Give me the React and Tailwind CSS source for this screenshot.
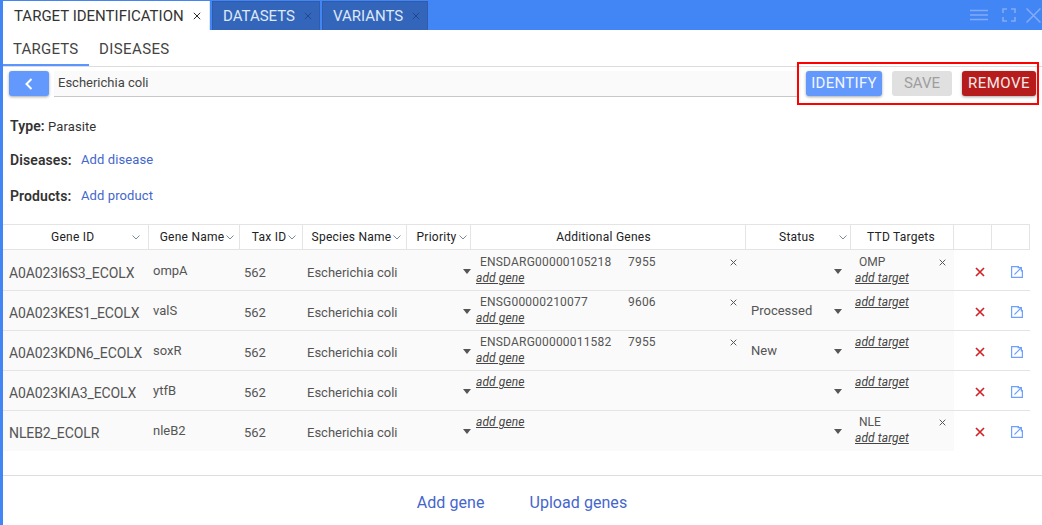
import React from "react";

const cols = "grid grid-cols-[146px_91px_63px_104px_64px_275px_105px_103px_38px_38px]";

function Chevron() {
  return (
    <svg width="8" height="5" viewBox="0 0 8 5" className="shrink-0" fill="none" stroke="#7d8a99" strokeWidth="1">
      <path d="M0.5 0.5 L4 4 L7.5 0.5" />
    </svg>
  );
}

function Caret() {
  return <span className="block w-0 h-0 border-x-[4px] border-x-transparent border-t-[5px] border-t-[#555]" />;
}

function Cross({ c = "#555", s = 7, w = 1.4 }) {
  return (
    <svg width={s} height={s} viewBox="0 0 10 10" stroke={c} strokeWidth={w} fill="none" className="shrink-0">
      <path d="M1 1 L9 9 M9 1 L1 9" />
    </svg>
  );
}

function Head({ children, chevron, className = "", chevClass = "" }) {
  return (
    <div className={`h-[24px] flex items-center justify-center border-r border-[#e4e4e4] text-[12px] tracking-[0.25px] text-[#222] ${className}`}>
      <span>{children}</span>
      {chevron && <span className={chevClass || "ml-[2px]"}><Chevron /></span>}
    </div>
  );
}

function AddLink({ children }) {
  return <span className="italic underline text-[12px] tracking-[0.1px] leading-[16px] text-[#444]">{children}</span>;
}

function Row({ id, name, gene, taxon, status, target, last }) {
  const text = "text-[13px] text-[#555]";
  return (
    <div className={`flex w-[1027px] h-[40px] ${last ? "" : "border-b border-[#e4e4e4]"}`}>
      <div className="grid grid-cols-[146px_91px_63px_104px_64px_275px_105px_103px] bg-[#fafafa] w-[951px]">
        <div className="text-[14px] tracking-[-0.1px] text-[#555] pl-[6px] pt-[14px] leading-[16px] whitespace-nowrap">{id}</div>
        <div className={`${text} pl-[4px] pt-[12px] leading-[16px]`}>{name}</div>
        <div className={`${text} pl-[4px] pt-[14px] leading-[16px]`}>562</div>
        <div className={`${text} pl-[4px] pt-[14px] leading-[16px] whitespace-nowrap`}>Escherichia coli</div>
        <div className="flex justify-end pt-[18px]"><Caret /></div>
        <div className="pt-[3px] pl-[5px]">
          {gene ? (
            <div className="flex items-center h-[16px] pl-[4px] text-[12px] tracking-[0.2px] leading-[16px] text-[#555]">
              <span className="w-[148px]">{gene}</span>
              <span className="w-[102px]">{taxon}</span>
              <Cross />
            </div>
          ) : null}
          <div className="leading-[16px] -mt-px"><AddLink>add gene</AddLink></div>
        </div>
        <div className="flex items-start justify-between pl-[5px] pr-[9px]">
          <span className={`${text} pt-[12px] leading-[16px]`}>{status}</span>
          <span className="pt-[18px]"><Caret /></span>
        </div>
        <div className="pt-[3px] pl-[4px]">
          {target ? (
            <div className="flex items-center justify-between h-[16px] pl-[4px] pr-[8px] text-[12px] leading-[16px] text-[#555]">
              <span>{target}</span>
              <Cross />
            </div>
          ) : null}
          <div className="leading-[16px] -mt-px"><AddLink>add target</AddLink></div>
        </div>
      </div>
      <div className="w-[38px] flex items-center justify-center pl-[13px] pt-[2px]">
        <Cross c="#d2222a" s={10} w={1.7} />
      </div>
      <div className="w-[38px] flex items-center justify-center pl-[12px] pt-[2px]">
        <svg width="12" height="12" viewBox="0 0 12 12" fill="none" stroke="#6ea0ff" strokeWidth="1.2">
          <path d="M8 0.6 H0.6 V11.4 H11.4 V4" />
          <path d="M3.5 8.5 L10 2 M6.5 1.6 H10.4 V5.5" />
        </svg>
      </div>
    </div>
  );
}

export default function App() {
  return (
    <div className="relative w-[1042px] h-[525px] overflow-hidden bg-white border-l-[3px] border-[#4285f4] font-['Roboto',sans-serif] text-[#333]">
      {/* top tab bar */}
      <div className="h-[30px] bg-[#4285f4] flex items-end -ml-[3px] pl-[3px]">
        <div className="h-[29px] w-[207px] bg-white flex items-center pl-[11px] pt-px text-[15px] text-[#333] border-r border-[#dce6f5]">
          <span>TARGET IDENTIFICATION</span>
          <span className="ml-[9px]"><Cross c="#222" s={8} w={1.2} /></span>
        </div>
        <div className="ml-[2px] h-[29px] w-[108px] bg-[#3366bb] border border-b-0 border-[#2f5dab] flex items-center pl-[10px] text-[15px] text-[#dfe8f7]">
          <span>DATASETS</span>
          <span className="ml-[9px]"><Cross c="#1e3f7d" s={8} w={1} /></span>
        </div>
        <div className="ml-[2px] h-[29px] w-[106px] bg-[#3366bb] border border-b-0 border-[#2f5dab] flex items-center pl-[10px] text-[15px] text-[#dfe8f7]">
          <span>VARIANTS</span>
          <span className="ml-[9px]"><Cross c="#1e3f7d" s={8} w={1} /></span>
        </div>
        <div className="ml-auto h-[30px] flex items-center pr-[1px] gap-[14px]">
          <svg width="18" height="12" viewBox="0 0 18 12" stroke="#82acf8" strokeWidth="1.6"><path d="M0 1.5H18M0 6H18M0 10.5H18" /></svg>
          <svg width="14" height="14" viewBox="0 0 14 14" stroke="#82acf8" strokeWidth="1.6" fill="none"><path d="M1 5V1H5M9 1H13V5M13 9V13H9M5 13H1V9" /></svg>
          <svg width="15" height="15" viewBox="0 0 14 14" stroke="#82acf8" strokeWidth="1.4" fill="none" className="-ml-[4px]"><path d="M0.5 0.5L13.5 13.5M13.5 0.5L0.5 13.5" /></svg>
        </div>
      </div>

      {/* sub tabs */}
      <div className="h-[37px] flex border-b border-[#dddddd] text-[15px] text-[#444]">
        <div className="w-[86px] h-[36px] border-b-2 border-[#5b96ff] pl-[10px] pt-[10px] leading-[18px] tracking-[0.2px]">TARGETS</div>
        <div className="pl-[10px] pt-[10px] leading-[18px] tracking-[0.4px]">DISEASES</div>
      </div>

      {/* toolbar */}
      <div className="flex pl-[6px] pt-[4px] h-[34px]">
        <div className="w-[40px] h-[25px] rounded-[3px] bg-[#6398fd] shadow-[0_1px_3px_rgba(0,0,0,0.35)] flex items-center justify-center">
          <svg width="8" height="12" viewBox="0 0 8 12" fill="none" stroke="#fff" strokeWidth="2"><path d="M6.5 1 L1.5 6 L6.5 11" /></svg>
        </div>
        <div className="ml-[5px] w-[744px] h-[26px] bg-[#fafafa] border-b border-[#c8c8c8] pl-[4px] text-[13px] leading-[24px] text-[#444]">Escherichia coli</div>
        <div className="flex ml-[8px] h-[25px] text-[15px]">
          <div className="w-[76px] rounded-[3px] bg-[#6398fd] text-[#f2f6ff] tracking-[0.3px] shadow-[0_1px_3px_rgba(0,0,0,0.35)] flex items-center justify-center">IDENTIFY</div>
          <div className="w-[60px] ml-[10px] rounded-[3px] bg-[#e0e0e0] text-[#9e9e9e] flex items-center justify-center">SAVE</div>
          <div className="w-[74px] ml-[10px] rounded-[3px] bg-[#b71c1c] text-[#f5eaea] tracking-[0.5px] shadow-[0_1px_3px_rgba(0,0,0,0.35)] flex items-center justify-center">REMOVE</div>
        </div>
      </div>
      <div className="absolute left-[794px] top-[62px] w-[242px] h-[43px] border-2 border-[#ff0000] pointer-events-none" />

      {/* details */}
      <div className="pl-[7px] pt-[17px] text-[13px] tracking-[0.1px] text-[#333] h-[124px] leading-[16px]">
        <div><span className="font-semibold text-[14px]">Type:</span> Parasite</div>
        <div className="mt-[17px] flex"><span className="font-semibold text-[14px] w-[71px]">Diseases:</span><span className="text-[#4466cc]">Add disease</span></div>
        <div className="mt-[20px] flex"><span className="font-semibold text-[14px] w-[71px]">Products:</span><span className="text-[#4466cc]">Add product</span></div>
      </div>

      {/* table */}
      <div className={`${cols} w-[1027px] border-y border-[#e4e4e4] mt-[-1px]`}>
        <Head className="justify-start pl-[48px]" chevron chevClass="ml-[38px]">Gene ID</Head>
        <Head className="pl-[6px]" chevron>Gene Name</Head>
        <Head className="pl-[6px]" chevron>Tax ID</Head>
        <Head className="pl-[4px]" chevron>Species Name</Head>
        <Head className="pl-[6px]" chevron>Priority</Head>
        <Head className="pr-[9px]">Additional Genes</Head>
        <Head className="justify-start pl-[33px]" chevron chevClass="ml-[24px]">Status</Head>
        <Head className="pr-[2px]">TTD Targets</Head>
        <Head />
        <Head />
      </div>
      <div className="w-[1027px]">
        <div className="w-[951px] h-px bg-[#fafafa]" />
        <Row id="A0A023I6S3_ECOLX" name="ompA" gene="ENSDARG00000105218" taxon="7955" status="" target="OMP" />
        <Row id="A0A023KES1_ECOLX" name="valS" gene="ENSG00000210077" taxon="9606" status="Processed" />
        <Row id="A0A023KDN6_ECOLX" name="soxR" gene="ENSDARG00000011582" taxon="7955" status="New" />
        <Row id="A0A023KIA3_ECOLX" name="ytfB" />
        <Row id="NLEB2_ECOLR" name="nleB2" target="NLE" last />
      </div>

      {/* footer */}
      <div className="mt-[24px] border-t border-[#dddddd] flex justify-center gap-[45px] pt-[17px] pr-[1px] text-[16px] tracking-[0.05px] leading-[20px] text-[#4466cc]">
        <span>Add gene</span>
        <span>Upload genes</span>
      </div>
    </div>
  );
}
